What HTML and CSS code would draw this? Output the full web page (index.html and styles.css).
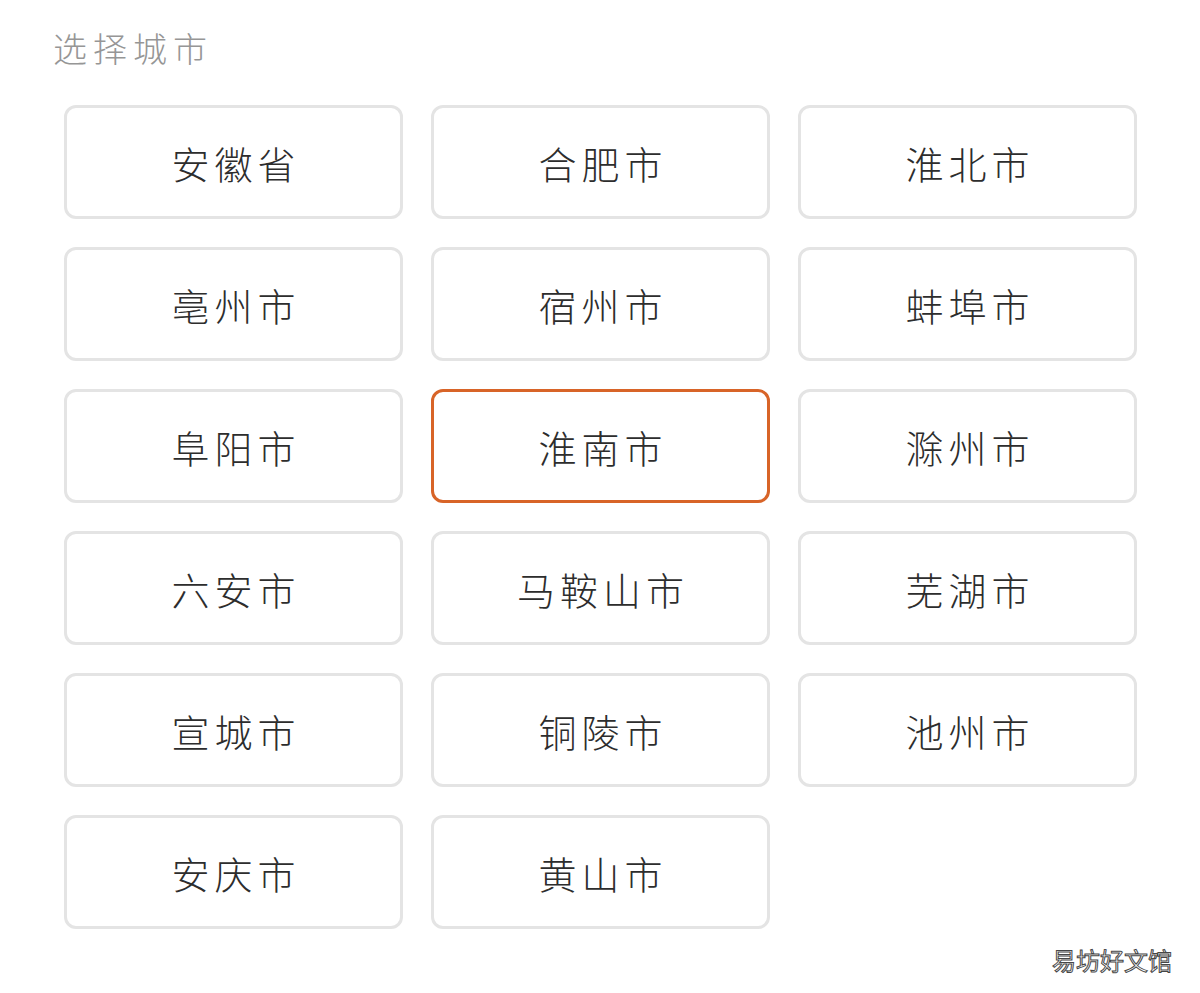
FILE: index.html
```html
<!DOCTYPE html>
<html lang="zh-CN">
<head>
    <meta charset="UTF-8">
    <meta name="viewport" content="width=device-width, initial-scale=1.0">
    <title>选择城市</title>
    <link rel="stylesheet" href="styles.css">
</head>
<body>
    <p class="page-title">选择城市</p>
    <div class="city-grid">
        <div class="city-item">安徽省</div>
        <div class="city-item">合肥市</div>
        <div class="city-item">淮北市</div>
        <div class="city-item">亳州市</div>
        <div class="city-item">宿州市</div>
        <div class="city-item">蚌埠市</div>
        <div class="city-item">阜阳市</div>
        <div class="city-item is-selected">淮南市</div>
        <div class="city-item">滁州市</div>
        <div class="city-item">六安市</div>
        <div class="city-item">马鞍山市</div>
        <div class="city-item">芜湖市</div>
        <div class="city-item">宣城市</div>
        <div class="city-item">铜陵市</div>
        <div class="city-item">池州市</div>
        <div class="city-item">安庆市</div>
        <div class="city-item">黄山市</div>
    </div>
    <p class="watermark">易坊好文馆</p>
</body>
</html>
```

FILE: styles.css
```css
body{
    margin: 0;
    background-color: white;
    font-family: "Noto Sans CJK SC", "Noto Sans", sans-serif;
}

.page-title{
    margin: 0;
    padding: 26px 0 0 53px;
    font-size: 34px;
    line-height: 44px;
    font-weight: 300;
    letter-spacing: 6px;
    color: rgb(150, 150, 150);
}

.city-grid{
    display: grid;
    grid-template-columns: 339px 339px 339px;
    grid-auto-rows: 114px;
    column-gap: 28px;
    row-gap: 28px;
    padding: 35px 0 0 64px;
}

.city-item{
    box-sizing: border-box;
    display: flex;
    align-items: center;
    justify-content: center;
    border: 3px solid rgb(228, 228, 228);
    border-radius: 12px;
    font-size: 38px;
    font-weight: 300;
    letter-spacing: 5px;
    padding: 0 0 0 5px;
    color: rgb(45, 45, 45);
}

.is-selected{
    border-color: rgb(216, 100, 40);
}

.watermark{
    margin: 0;
    position: absolute;
    left: 1052px;
    top: 942px;
    font-size: 24px;
    line-height: 36px;
    color: white;
    -webkit-text-stroke: 1px rgb(70, 70, 70);
}
```
